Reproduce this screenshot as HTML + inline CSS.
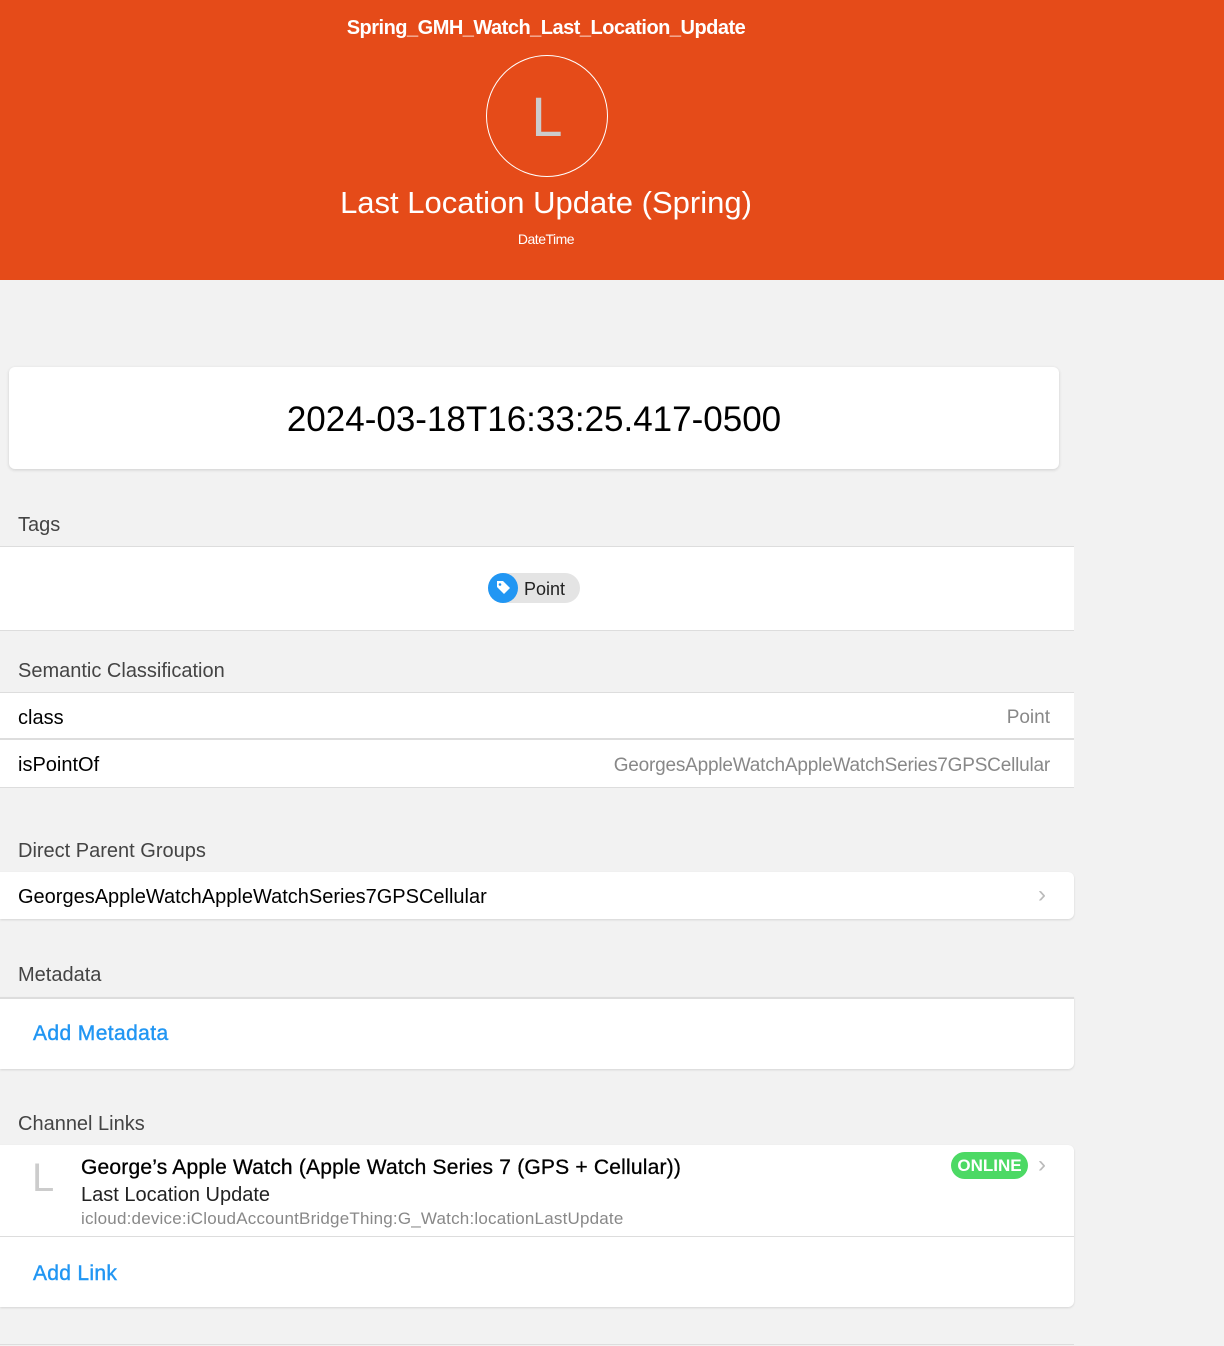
<!DOCTYPE html>
<html><head><style>
body{margin:0;width:1224px;height:1346px;background:#f2f2f2;font-family:"Liberation Sans",sans-serif;position:relative;overflow:hidden;color:#000}
.a{position:absolute;white-space:nowrap}
.hdr{position:absolute;left:0;top:0;width:1224px;height:280px;background:#e54b19}
.white{position:absolute;background:#fff}
.h{font-size:20px;color:#444}
.line{position:absolute;height:1px;background:#ddd}
</style></head><body>
<div class="hdr"></div>
<div class="a" style="left:0;width:1092px;text-align:center;top:17px;font-size:20px;font-weight:bold;color:#fff;letter-spacing:-0.5px">Spring_GMH_Watch_Last_Location_Update</div>
<div class="a" style="left:486px;top:55px;width:120px;height:120px;border:1px solid #fff;border-radius:50%"></div>
<div class="a" style="left:486px;top:84px;width:122px;text-align:center;font-size:56px;color:#ccc">L</div>
<div class="a" style="left:0;width:1092px;text-align:center;top:185px;font-size:31px;color:#fff">Last Location Update (Spring)</div>
<div class="a" style="left:0;width:1092px;text-align:center;top:231px;font-size:14px;color:#fff;letter-spacing:-0.5px">DateTime</div>

<div class="white" style="left:9px;top:367px;width:1050px;height:102px;border-radius:6px;box-shadow:0 1px 3px rgba(0,0,0,.15)"></div>
<div class="a" style="left:9px;width:1050px;text-align:center;top:400px;font-size:35px">2024-03-18T16:33:25.417-0500</div>

<div class="a h" style="left:18px;top:514px">Tags</div>
<div class="white" style="left:0;top:546px;width:1074px;height:83px;border-top:1px solid #ddd;border-bottom:1px solid #ddd"></div>
<div class="a" style="left:488px;top:573px;width:92px;height:30px;background:#e4e4e4;border-radius:15px"></div>
<div class="a" style="left:488px;top:573px;width:30px;height:30px;background:#2196f3;border-radius:50%"></div>
<svg class="a" style="left:493px;top:578px" width="20" height="20" viewBox="0 0 20 20"><path d="M4 3h6l7 7-6 6-7-7z" fill="#fff"/><circle cx="7" cy="6.5" r="1.3" fill="#2196f3"/></svg>
<div class="a" style="left:524px;top:579px;font-size:18px;color:#222">Point</div>

<div class="a h" style="left:18px;top:660px">Semantic Classification</div>
<div class="white" style="left:0;top:692px;width:1074px;height:94px;border-top:1px solid #ddd;border-bottom:1px solid #ddd"></div>
<div class="line" style="left:0;top:738px;width:1074px;height:2px"></div>
<div class="a" style="left:18px;top:707px;font-size:20px">class</div>
<div class="a" style="right:174px;top:707px;font-size:19px;color:#888">Point</div>
<div class="a" style="left:18px;top:754px;font-size:20px">isPointOf</div>
<div class="a" style="right:174px;top:755px;font-size:19px;color:#888;letter-spacing:-0.2px">GeorgesAppleWatchAppleWatchSeries7GPSCellular</div>

<div class="a h" style="left:18px;top:840px">Direct Parent Groups</div>
<div class="white" style="left:0;top:872px;width:1074px;height:47px;border-radius:0 6px 6px 0;box-shadow:0 1px 2px rgba(0,0,0,.12)"></div>
<div class="a" style="left:18px;top:886px;font-size:20px;letter-spacing:0px">GeorgesAppleWatchAppleWatchSeries7GPSCellular</div>
<div class="a" style="left:1038px;top:881px;font-size:24px;color:#bbb">›</div>

<div class="a h" style="left:18px;top:964px">Metadata</div>
<div class="white" style="left:0;top:997px;width:1074px;height:70px;border-top:2px solid #ddd;border-radius:0 0 6px 0;box-shadow:0 1px 2px rgba(0,0,0,.12)"></div>
<div class="a" style="left:33px;top:1022px;font-size:21px;color:#2196f3;letter-spacing:0.4px;-webkit-text-stroke:0.4px #2196f3">Add Metadata</div>

<div class="a h" style="left:18px;top:1113px">Channel Links</div>
<div class="white" style="left:0;top:1145px;width:1074px;height:162px;border-radius:0 6px 6px 0;box-shadow:0 1px 2px rgba(0,0,0,.12)"></div>
<div class="line" style="left:0;top:1236px;width:1074px"></div>
<div class="a" style="left:32px;top:1156px;font-size:40px;color:#ccc">L</div>
<div class="a" style="left:81px;top:1156px;font-size:21px;letter-spacing:0.2px;-webkit-text-stroke:0.3px #000">George’s Apple Watch (Apple Watch Series 7 (GPS + Cellular))</div>
<div class="a" style="left:81px;top:1184px;font-size:20px;color:#222">Last Location Update</div>
<div class="a" style="left:81px;top:1209px;font-size:17px;color:#888;letter-spacing:0.2px">icloud:device:iCloudAccountBridgeThing:G_Watch:locationLastUpdate</div>
<div class="a" style="left:951px;top:1152px;width:77px;height:27px;background:#4cd964;border-radius:14px;color:#fff;font-weight:bold;font-size:17px;text-align:center;line-height:27px">ONLINE</div>
<div class="a" style="left:1038px;top:1151px;font-size:24px;color:#bbb">›</div>
<div class="a" style="left:33px;top:1262px;font-size:21px;color:#2196f3;letter-spacing:0.3px;-webkit-text-stroke:0.4px #2196f3">Add Link</div>
<div class="line" style="left:0;top:1344px;width:1074px"></div>
</body></html>
